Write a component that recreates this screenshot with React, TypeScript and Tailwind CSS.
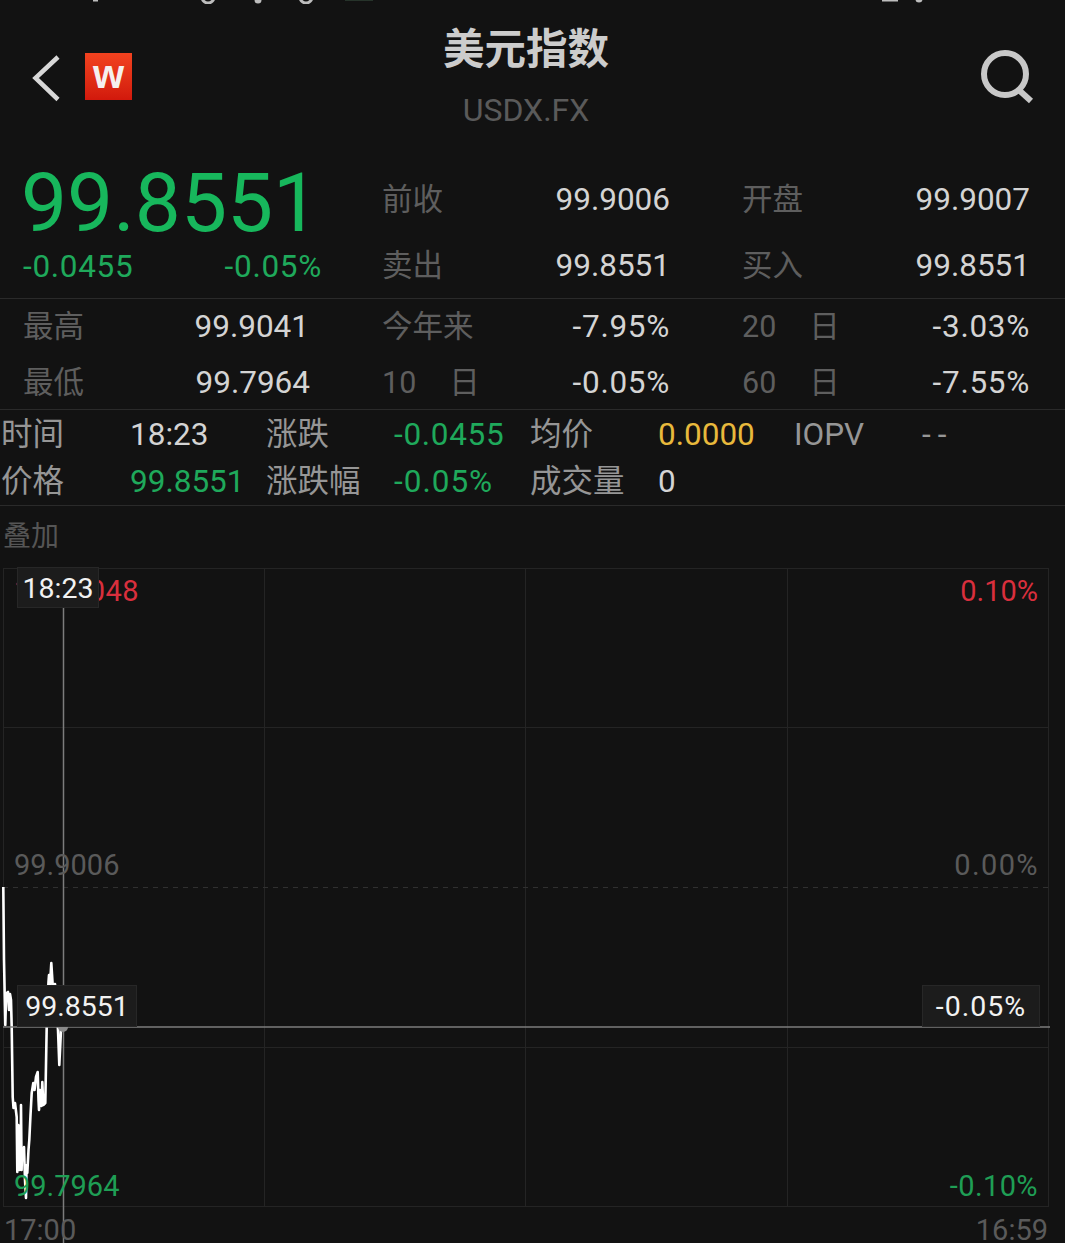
const FONT = "font-['Roboto','Noto_Sans_CJK_SC',sans-serif]";

function Cell({ label, value, color = "text-[#d4d4d4]", className = "" }: { label: React.ReactNode; value: string; color?: string; className?: string }) {
  const wide = value.startsWith("-") ? "tracking-[0.7px]" : "";
  return (
    <div className={`flex items-center justify-between ${className}`}>
      <span className="text-[#5e5e5e] text-[30.5px] whitespace-nowrap">{label}</span>
      <span className={`${color} ${wide} text-[31.5px]`}>{value}</span>
    </div>
  );
}

function Row({ cells }: { cells: [string, string, string][] }) {
  return (
    <div className="grid h-[47px] items-center text-[31.5px] grid-cols-[129px_136px_128px_136px_128px_136px_128px_1fr]">
      {cells.flatMap(([l, v, c]) => [
        <span key={l} className="text-[#969696] whitespace-nowrap">{l}</span>,
        <span key={l + "v"} className={`${c} whitespace-nowrap`}>{v}</span>,
      ])}
    </div>
  );
}

function Day({ n }: { n: string }) {
  return (
    <>
      {n}
      <span className="ml-[33px]">日</span>
    </>
  );
}

const LINE =
  "3.3,887 4,960 5.3,1025 6,1000 6.7,993 8,992 9,1010 10,994 11,1000 11.7,1027 12.7,1097 13.5,1108 15,1103 16.7,1117 17.3,1172 18.3,1125 19.3,1127 19.6,1170 20.7,1162 21,1105 21.6,1170 22,1153 23,1160 24,1147 25,1180 26,1198 26.6,1165 27.3,1173 28.5,1150 29.3,1140 30.5,1115 31.7,1093 33.3,1083 34.5,1090 36,1077 37.7,1072 38.5,1100 39,1110 40,1090 40.7,1093 41.5,1106 42.3,1082 43.3,1105 45.3,1103 46.7,1027 47.5,1000 48.5,982 49,975 50,985 51.3,963 52.7,985 55,984 58,1030 59.3,1065 61,1030";

const tip =
  "absolute flex items-center justify-center pt-[3px] bg-[#1c1c1c] border border-[#272727] text-[#f2f2f2] text-[28.5px]";

function Chart() {
  return (
    <div className="relative h-[676px] text-[29px] overflow-hidden">
      <svg className="absolute inset-0 w-full h-full" viewBox="0 567 1065 676" fill="none">
        <g stroke="#242424" strokeWidth="1">
          <rect x="3.5" y="568.5" width="1045" height="638" />
          <path d="M264.5 568V1206M525.5 568V1206M787.5 568V1206M3 727.5H1048M3 1047.5H1048" />
          <path d="M3 887.5H1048" strokeDasharray="5 5" stroke="#303030" />
        </g>
        <polyline points={LINE} stroke="#ffffff" strokeWidth="2.6" strokeLinejoin="round" />
        <path d="M63.5 608V1243" stroke="#7c7c7c" strokeWidth="1.5" />
        <path d="M3 1027H1050" stroke="#7c7c7c" strokeWidth="1.5" />
        <circle cx="63" cy="1027" r="5" fill="#8a8a8a" />
      </svg>
      <span className="absolute left-[14px] top-[3px] tracking-[0.4px] text-[#d92f3d]">100.0048</span>
      <span className="absolute right-[27px] top-[3px] text-[#d92f3d]">0.10%</span>
      <span className="absolute left-[14px] top-[277px] text-[#5a5a5a]">99.9006</span>
      <span className="absolute right-[26px] top-[277px] tracking-[1.4px] text-[#5a5a5a]">0.00%</span>
      <span className="absolute left-[14px] top-[598px] text-[#1f9e55]">99.7964</span>
      <span className="absolute right-[27px] top-[598px] tracking-[0.4px] text-[#1f9e55]">-0.10%</span>
      <span className="absolute left-[4px] top-[642px] text-[#5a5a5a]">17:00</span>
      <span className="absolute right-[17px] top-[642px] text-[#5a5a5a]">16:59</span>
      <span className={`${tip} left-[17px] top-0 w-[82px] h-[41px]`}>18:23</span>
      <span className={`${tip} left-[17px] top-[418px] w-[120px] h-[42px]`}>99.8551</span>
      <span className={`${tip} left-[922px] top-[418px] w-[118px] h-[42px] tracking-[1px]`}>-0.05%</span>
    </div>
  );
}

export default function App() {
  const green = "text-[#1fa95b] tracking-[0.7px]";
  return (
    <div className={`relative w-[1065px] h-[1243px] overflow-hidden bg-[#121212] ${FONT}`}>
      {/* clipped status bar remnants */}
      <div className="absolute left-0 top-0 w-full h-[4px]">
        <svg className="w-full h-full" viewBox="0 0 1065 4">
          <g fill="#bdbdbd">
            <rect x="93" y="0" width="5" height="1.5" />
            <circle cx="208" cy="-3" r="6" fill="none" stroke="#bdbdbd" strokeWidth="3" />
            <circle cx="258" cy="0" r="3.5" />
            <circle cx="306" cy="-3" r="6" fill="none" stroke="#bdbdbd" strokeWidth="3" />
            <rect x="882" y="0" width="16" height="1.5" />
            <circle cx="919" cy="-1" r="3.5" />
          </g>
          <rect x="345" y="0" width="28" height="1" fill="#26332a" />
        </svg>
      </div>

      <header className="flex h-[140px]">
        <div className="w-[443px] pt-[53px] pl-[32px] flex items-start gap-[23px]">
          <svg width="30" height="48" viewBox="0 0 30 48" fill="none" className="mt-[1px]">
            <path d="M26 3L3.5 24L26 45.5" stroke="#d8d8d8" strokeWidth="4.5" />
          </svg>
          <div className="w-[47px] h-[47px] bg-linear-to-b from-[#f2421f] to-[#d2180c] flex items-center justify-center text-[#f5f0ee] text-[40px] font-bold leading-none font-['Liberation_Sans',sans-serif] pb-[5px]">w</div>
        </div>
        <div className="w-[166px] flex flex-col items-center">
          <h1 className="mt-[24px] text-[41.5px] leading-[52px] font-bold text-[#cccccc] whitespace-nowrap">美元指数</h1>
          <div className="mt-[14px] text-[32px] leading-[40px] text-[#5a5a5a] whitespace-nowrap">USDX.FX</div>
        </div>
        <div className="flex-1 flex justify-end pr-[29px] pt-[49px]">
          <svg width="56" height="56" viewBox="0 0 56 56" fill="none">
            <circle cx="25" cy="25" r="21" stroke="#c8c8c8" strokeWidth="6" />
            <path d="M40 42L51 52" stroke="#c8c8c8" strokeWidth="6" />
          </svg>
        </div>
      </header>

      <section className="flex h-[159px] border-b border-[#2a2a2a] pl-[23px]">
        <div className="w-[359px] pr-[60px] pt-[17px]">
          <div className="text-[82px] leading-[92px] -ml-[2px] text-[#17b75c]">99.8551</div>
          <div className={`flex justify-between text-[31.5px] leading-[36px] ${green}`}>
            <span>-0.0455</span>
            <span>-0.05%</span>
          </div>
        </div>
        <div className="w-[360px] pr-[72px] pt-[33px]">
          <Cell label="前收" value="99.9006" className="h-[66px] -mt-[6px]" />
          <Cell label="卖出" value="99.8551" className="h-[66px]" />
        </div>
        <div className="w-[288px] pt-[33px]">
          <Cell label="开盘" value="99.9007" className="h-[66px] -mt-[6px]" />
          <Cell label="买入" value="99.8551" className="h-[66px]" />
        </div>
      </section>

      <section className="h-[111px] border-b border-[#2a2a2a] pl-[23px]">
        <div className="flex h-[56px]">
          <Cell label="最高" value="99.9041" className="w-[286px]" />
          <Cell label="今年来" value="-7.95%" className="w-[288px] ml-[73px]" />
          <Cell label={<Day n="20" />} value="-3.03%" className="w-[288px] ml-[72px]" />
        </div>
        <div className="flex h-[55px]">
          <Cell label="最低" value="99.7964" className="w-[287px]" />
          <Cell label={<Day n="10" />} value="-0.05%" className="w-[288px] ml-[72px]" />
          <Cell label={<Day n="60" />} value="-7.55%" className="w-[288px] ml-[72px]" />
        </div>
      </section>

      <section className="h-[96px] border-b border-[#2a2a2a] pl-[1px] pt-[1px]">
        <Row
          cells={[
            ["时间", "18:23", "text-[#d4d4d4]"],
            ["涨跌", "-0.0455", green],
            ["均价", "0.0000", "text-[#e8b93c]"],
            ["IOPV", "--", "text-[#969696] tracking-[7px]"],
          ]}
        />
        <Row
          cells={[
            ["价格", "99.8551", "text-[#1fa95b]"],
            ["涨跌幅", "-0.05%", "text-[#1fa95b] tracking-[1px]"],
            ["成交量", "0", "text-[#d4d4d4]"],
          ]}
        />
      </section>

      <div className="h-[61px] pl-[3px] pt-[13px] text-[28px] leading-[36px] text-[#555555]">叠加</div>

      <Chart />
    </div>
  );
}
